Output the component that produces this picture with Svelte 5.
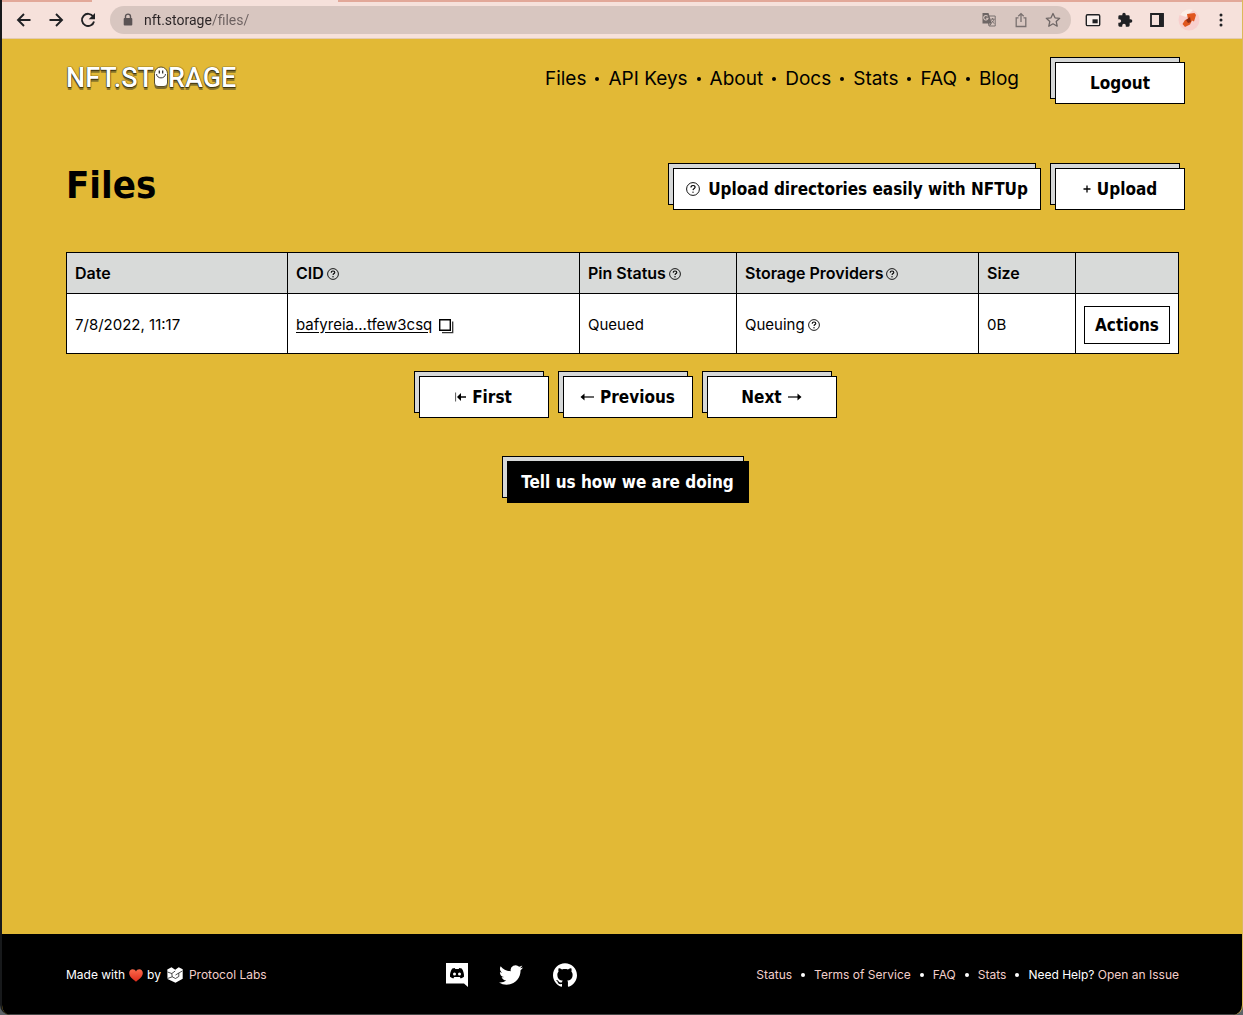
<script lang="ts">
  const navLinks = ['Files', 'API Keys', 'About', 'Docs', 'Stats', 'FAQ', 'Blog'];
  const footerLinks = ['Status', 'Terms of Service', 'FAQ', 'Stats'];
  const columns = [
    { label: 'Date', help: false },
    { label: 'CID', help: true },
    { label: 'Pin Status', help: true },
    { label: 'Storage Providers', help: true },
    { label: 'Size', help: false }
  ];
</script>

{#snippet help()}
  <svg class="help" viewBox="0 0 12 12" aria-hidden="true">
    <circle cx="6" cy="6" r="5.4" fill="none" stroke="currentColor" stroke-width="0.9" />
    <path d="M4.3 4.7C4.2 3.6 5 3 6 3s1.8.6 1.8 1.5C7.800 5.500 6.200 5.500 6 6.900" fill="none" stroke="currentColor" stroke-width="1.1" />
    <circle cx="6" cy="8.700" r="0.700" fill="currentColor" />
  </svg>
{/snippet}

<div class="window">
  <div class="tabs"><span class="tab"></span></div>
  <div class="toolbar">
    <button class="tool" aria-label="Back">
      <svg viewBox="0 0 16 16"><path d="M14.500 8H2.200M8 2 2 8l6 6" fill="none" stroke="#202124" stroke-width="1.900" /></svg>
    </button>
    <button class="tool" aria-label="Forward">
      <svg viewBox="0 0 16 16"><path d="M1.500 8h12.300M8 2l6 6-6 6" fill="none" stroke="#202124" stroke-width="1.900" /></svg>
    </button>
    <button class="tool" aria-label="Reload">
      <svg viewBox="0 0 16 16"><path d="M13.200 4.600A6.100 6.100 0 1 0 14 9.400" fill="none" stroke="#202124" stroke-width="1.900" /><path d="M15 1v6.300H8.700z" fill="#202124" /></svg>
    </button>
    <div class="address">
      <svg class="lock" viewBox="0 0 10 14"><path d="M2.500 6V3.600a2.500 2.500 0 0 1 5 0V6" fill="none" stroke="#5a5354" stroke-width="1.400" /><rect x="0.700" y="5" width="8.600" height="7.500" rx="1" fill="#5a5354" /></svg>
      <input aria-label="Address" value="nft.storage/files/" />
      <button class="tool" aria-label="Translate this page">
        <svg viewBox="0 0 16 16"><path d="M6 4h8.200v10H8z" fill="none" stroke="#79706f" /><path d="M1.500 1h6l3.300 10.500H1.500z" fill="#6e6665" /><path d="M6.600 4.400A2.200 2.200 0 1 0 7 6.300H4.900" fill="none" stroke="#d7c5bf" stroke-width="1.100" /><path d="M8.500 11.500h2.300L8.700 14z" fill="#6e6665" /><path d="M9.600 7.200h4M11.600 6v1.200M12.900 7.400c-.4 1.700-1.500 2.900-2.600 3.500M10.500 8.400l2.700 3.300" fill="none" stroke="#6e6665" stroke-width="0.900" /></svg>
      </button>
      <button class="tool" aria-label="Share">
        <svg viewBox="0 0 16 16"><path d="M5.500 5.800H3.200v8.700h9.600V5.800h-2.300M8 10V2M5.300 4.300 8 1.600l2.700 2.700" fill="none" stroke="#79706f" stroke-width="1.300" /></svg>
      </button>
      <button class="tool" aria-label="Bookmark this tab">
        <svg viewBox="0 0 16 16"><path d="m8 1.500 2 4.300 4.700.5-3.500 3.200 1 4.700L8 11.800l-4.200 2.400 1-4.700L1.300 6.300 6 5.800z" fill="none" stroke="#6e6665" stroke-width="1.300" stroke-linejoin="round" /></svg>
      </button>
    </div>
    <button class="tool" aria-label="Picture in picture">
      <svg viewBox="0 0 16 16"><rect x="1.300" y="2.800" width="13.400" height="10.800" rx="1.200" fill="#f9efec" stroke="#202124" stroke-width="1.400" /><path d="M7.500 7.300h5.200v4H7.500z" fill="#202124" /></svg>
    </button>
    <button class="tool" aria-label="Extensions">
      <svg viewBox="0 0 24 24"><path d="M20.500 11H19V7a2 2 0 0 0-2-2h-4V3.500a2.500 2.500 0 0 0-5 0V5H4a2 2 0 0 0-2 2v3.800h1.500a2.700 2.700 0 0 1 0 5.400H2V20a2 2 0 0 0 2 2h3.800v-1.500a2.700 2.700 0 0 1 5.400 0V22H17a2 2 0 0 0 2-2v-4h1.500a2.500 2.500 0 0 0 0-5z" fill="#202124" /></svg>
    </button>
    <button class="tool" aria-label="Side panel">
      <svg viewBox="0 0 16 16"><path d="M2 2h12v12H2z" fill="none" stroke="#202124" stroke-width="1.800" /><path d="M10 2h4.500v12H10z" fill="#202124" /></svg>
    </button>
    <button class="tool profile" aria-label="Profile">
      <svg viewBox="0 0 22 22"><circle cx="11" cy="11" r="10.500" fill="#f8cfcd" /><path d="M2 6a10.500 10.500 0 0 1 13-5L8 8z" fill="#fbeee8" /><path d="m9 5 7.500-1 1.500 2-2 6.500-2-1-2 4-5 2.500-2.500-3L7 11l3-1z" fill="#e0561f" /><path d="m8 11 4-3 1 5-3 1z" fill="#8d2d13" /></svg>
    </button>
    <button class="tool" aria-label="Menu">
      <svg viewBox="0 0 16 16" fill="#202124"><circle cx="8" cy="3" r="1.500" /><circle cx="8" cy="8" r="1.500" /><circle cx="8" cy="13" r="1.500" /></svg>
    </button>
  </div>

  <header>
    <a class="logo" href="#home" aria-label="NFT.Storage home">
      <span>NFT.ST</span>
      <svg viewBox="0 0 14 24" aria-hidden="true"><path d="M.5 10h13v9.500a3.500 3.500 0 0 1-3.500 3.500H4A3.500 3.500 0 0 1 .5 19.500z" fill="#7d6a2c" /><path d="M.5 7.500a6.500 6.500 0 0 1 13 0v9.500a3.500 3.500 0 0 1-3.500 3.500H4A3.500 3.500 0 0 1 .5 17z" fill="#fff" stroke="#4c411d" stroke-width="0.900" /><path d="M2.500 8c.5 5.200 8.500 5.200 9 0" fill="none" stroke="#222" stroke-width="0.900" /><path d="M5.300 4.500v3M8.700 4.500v3" stroke="#222" stroke-width="1.200" /></svg>
      <span>RAGE</span>
    </a>
    <nav aria-label="Main">
      {#each navLinks as link, i}
        {#if i}<span class="dot"></span>{/if}
        <a href="#{link}">{link}</a>
      {/each}
    </nav>
    <button class="btn">Logout</button>
  </header>

  <main>
    <div class="title">
      <h1>Files</h1>
      <button class="btn wide">
        <svg class="help big" viewBox="0 0 12 12" aria-hidden="true"><circle cx="6" cy="6" r="5.500" fill="none" stroke="currentColor" stroke-width="0.800" /><path d="M4.300 4.700C4.200 3.600 5 3 6 3s1.800.6 1.800 1.500C7.800 5.500 6.200 5.500 6 6.900" fill="none" stroke="currentColor" /><circle cx="6" cy="8.700" r="0.600" fill="currentColor" /></svg>
        Upload directories easily with NFTUp
      </button>
      <button class="btn">
        <svg class="plus" viewBox="0 0 8 8" aria-hidden="true"><path d="M4 0.500v7M.5 4h7" stroke="currentColor" stroke-width="1.300" /></svg>
        Upload
      </button>
    </div>

    <table>
      <thead>
        <tr>
          {#each columns as column}
            <th scope="col">{column.label}{#if column.help}{@render help()}{/if}</th>
          {/each}
          <th aria-label="Actions"></th>
        </tr>
      </thead>
      <tbody>
        <tr>
          <td>7/8/2022, 11:17</td>
          <td>
            <a href="#bafyreia">bafyreia...tfew3csq</a>
            <button class="copy" aria-label="Copy CID">
              <svg viewBox="0 0 16 16"><path d="M1.700 1.700h10.600v10.600H1.700z" fill="none" stroke="#000" stroke-width="1.400" /><path d="M14.700 3.500v11.200H4" fill="none" stroke="#333" stroke-width="1.300" /></svg>
            </button>
          </td>
          <td>Queued</td>
          <td>Queuing{@render help()}</td>
          <td>0B</td>
          <td><button class="actions">Actions</button></td>
        </tr>
      </tbody>
    </table>

    <div class="pager">
      <button class="btn">
        <svg class="first" viewBox="0 0 11 10" aria-hidden="true"><path d="M.6.500v9" stroke="#555" /><path d="M3 5h8" stroke="#000" stroke-width="1.500" /><path d="M2 5 6 1v8z" /></svg>
        First
      </button>
      <button class="btn">
        <svg class="arrow" viewBox="0 0 14 10" aria-hidden="true"><path d="M2 5h12" stroke="#000" stroke-width="1.200" /><path d="M.5 5 4.500 1.500v7z" /></svg>
        Previous
      </button>
      <button class="btn">
        Next
        <svg class="arrow" viewBox="0 0 14 10" aria-hidden="true"><path d="M0 5h12" stroke="#000" stroke-width="1.200" /><path d="M13.500 5l-4-3.500v7z" /></svg>
      </button>
    </div>
    <div class="feedback"><button class="btn dark">Tell us how we are doing</button></div>
  </main>

  <footer>
    <div class="credit">
      <span>Made with</span>
      <svg class="heart" viewBox="0 0 14 13" role="img" aria-label="love"><defs><linearGradient id="heart" x2="0" y2="1"><stop stop-color="#fb6a4b" /><stop offset="1" stop-color="#dd2a1b" /></linearGradient></defs><path d="M7 12.700C3 10 .2 7.400.2 4.100.2 1.900 1.800.3 3.700.3 5.200.3 6.400 1.100 7 2.500 7.600 1.100 8.800.3 10.300.3c1.900 0 3.500 1.600 3.500 3.800 0 3.300-2.800 5.900-6.800 8.600z" fill="url(#heart)" /></svg>
      <span>by</span>
      <svg class="labs" viewBox="0 0 16 16" aria-hidden="true"><path d="M.3 2.600 4.500.3l3.700 2.400L11.700.3l4 2v9.500L8.500 15.800.5 12z" fill="#fff" /><path d="m.5 5 4.300 1.500L8.200 4M4.800 6.500l.4 3.300 3.300 1.700 3.300-2V6L8.500 8M11.800 6l3.500-2M5.200 9.800.5 11.500" fill="none" stroke="#000" stroke-width="0.700" /></svg>
      <a href="#labs">Protocol Labs</a>
    </div>
    <div class="social">
      <a href="#discord" aria-label="Discord"><svg viewBox="0 0 24 24"><path d="M1 0h22v24l-4-3.500H1z" fill="#fff" /><path d="M7.300 5.600 9.700 5l.6 1.100h3.400l.6-1.100 2.400.6c1.700 2.300 2.500 5.300 2.300 8.200-1.100.9-2.100 1.400-3.300 1.600l-.9-1.400H9.200l-.9 1.400c-1.200-.2-2.200-.7-3.300-1.600-.2-2.900.6-5.900 2.300-8.200z" fill="#000" /><circle cx="9.500" cy="11" r="1.500" fill="#fff" /><circle cx="14.500" cy="11" r="1.500" fill="#fff" /></svg></a>
      <a href="#twitter" aria-label="Twitter"><svg viewBox="0 0 24 24"><path d="M23.953 4.570a10 10 0 01-2.825.775 4.958 4.958 0 002.163-2.723c-.951.555-2.005.959-3.127 1.184a4.920 4.920 0 00-8.384 4.482C7.690 8.095 4.067 6.130 1.640 3.162a4.822 4.822 0 00-.666 2.475c0 1.710.870 3.213 2.188 4.096a4.904 4.904 0 01-2.228-.616v.060a4.923 4.923 0 003.946 4.827 4.996 4.996 0 01-2.212.085 4.936 4.936 0 004.604 3.417 9.867 9.867 0 01-6.102 2.105c-.390 0-.779-.023-1.170-.067a13.995 13.995 0 007.557 2.209c9.053 0 13.998-7.496 13.998-13.985 0-.210 0-.420-.015-.630A9.935 9.935 0 0024 4.590z" fill="#fff" /></svg></a>
      <a href="#github" aria-label="GitHub"><svg viewBox="0 0 24 24"><path d="M12 .297c-6.630 0-12 5.373-12 12 0 5.303 3.438 9.800 8.205 11.385.600.113.820-.258.820-.577 0-.285-.010-1.040-.015-2.040-3.338.724-4.042-1.610-4.042-1.610C4.422 18.070 3.633 17.700 3.633 17.700c-1.087-.744.084-.729.084-.729 1.205.084 1.838 1.236 1.838 1.236 1.070 1.835 2.809 1.305 3.495.998.108-.776.417-1.305.760-1.605-2.665-.300-5.466-1.332-5.466-5.930 0-1.310.465-2.380 1.235-3.220-.135-.303-.540-1.523.105-3.176 0 0 1.005-.322 3.300 1.230.960-.267 1.980-.399 3-.405 1.020.006 2.040.138 3 .405 2.280-1.552 3.285-1.230 3.285-1.230.645 1.653.240 2.873.120 3.176.765.840 1.230 1.910 1.230 3.220 0 4.610-2.805 5.625-5.475 5.920.420.360.810 1.096.810 2.220 0 1.606-.015 2.896-.015 3.286 0 .315.210.690.825.570C20.565 22.092 24 17.592 24 12.297c0-6.627-5.373-12-12-12" fill="#fff" /></svg></a>
    </div>
    <div class="links">
      {#each footerLinks as link}
        <a href="#{link}">{link}</a><span class="dot"></span>
      {/each}
      <span>Need Help? <a href="#issue">Open an Issue</a></span>
    </div>
  </footer>
</div>

<style>
  :global(body) {
    margin: 0;
    background: #5d6468;
  }

  .window {
    box-sizing: border-box;
    min-height: 100vh;
    display: flex;
    flex-direction: column;
    overflow: hidden;
    border-left: 2px solid #17191b;
    border-right: 1px solid #dcb95a;
    border-radius: 0 0 10px 10px;
    background: #e2b936;
    color: #000;
    font-family: Inter, 'Liberation Sans', sans-serif;
    font-size: 16px;
    line-height: 24px;
  }

  svg {
    display: block;
    flex: none;
  }

  button {
    font: inherit;
    color: inherit;
    cursor: pointer;
  }

  a {
    color: inherit;
    text-decoration: none;
  }

  .tabs {
    height: 2px;
    background: #e2a899;
  }

  .tab {
    display: block;
    width: 246px;
    height: 2px;
    margin-left: 90px;
    background: #f6e1db;
  }

  .toolbar {
    display: flex;
    align-items: center;
    gap: 16px;
    height: 36px;
    padding: 0 13px 0 14px;
    background: #f6e1db;
    border-bottom: 1px solid #e3cbb0;
  }

  .tool {
    width: 16px;
    height: 16px;
    padding: 0;
    border: 0;
    background: none;
  }

  .tool svg {
    width: 16px;
    height: 16px;
  }

  .profile,
  .profile svg {
    width: 22px;
    height: 22px;
  }

  .profile {
    margin: 0 -3px;
  }

  .address {
    flex: 1;
    display: flex;
    align-items: center;
    gap: 16px;
    height: 28px;
    box-sizing: border-box;
    padding: 0 10px 0 13px;
    margin: 0 -2px;
    border-radius: 14px;
    background: #d8c6c0;
  }

  .address .lock {
    width: 10px;
    height: 14px;
  }

  .address input {
    flex: 1;
    min-width: 0;
    padding: 0;
    margin-left: -5px;
    border: 0;
    outline: 0;
    font: 14px/20px Roboto, sans-serif;
    color: transparent;
    background: linear-gradient(90deg, #2a2425 68px, #6b605f 68px);
    background-clip: text;
  }

  header {
    display: flex;
    align-items: center;
    padding: 23px 57px 0 64px;
  }

  .logo {
    display: flex;
    align-items: center;
    margin-right: auto;
    padding-bottom: 10px;
    color: #fff;
    font: 500 27px/32px Roboto, sans-serif;
    text-shadow: 0 0 1px #3a310f, 0 0 1px #3a310f, 0 1px 1px #3a310f, 0 3px 0 #8d772c;
  }

  .logo svg {
    width: 14px;
    height: 24px;
  }

  nav {
    display: flex;
    align-items: center;
    gap: 9px;
    margin-right: 36px;
    padding-bottom: 8px;
    font-size: 19px;
  }

  .dot {
    width: 4px;
    height: 4px;
    border-radius: 50%;
    background: currentColor;
  }

  .btn {
    display: flex;
    align-items: center;
    justify-content: center;
    gap: 6px;
    box-sizing: border-box;
    min-width: 130px;
    height: 42px;
    padding: 0 12px;
    border: 1px solid #000;
    border-radius: 0;
    background: #fff;
    box-shadow: -5px -5px 0 -1px #d6d8d8, -5px -5px 0 0 #000;
    font: bold 17px/24px 'DejaVu Sans Condensed', 'DejaVu Sans', sans-serif;
    white-space: nowrap;
  }

  .wide {
    gap: 8px;
  }

  .dark {
    min-width: 242px;
    background: #000;
    color: #fff;
  }

  main {
    flex: 1;
    padding: 0 63px 0 64px;
  }

  .title {
    display: flex;
    align-items: center;
    gap: 14px;
    margin: 64px -6px 42px 0;
  }

  h1 {
    margin: 0 auto 0 0;
    padding-bottom: 8px;
    font: bold 38px/34px 'DejaVu Sans Condensed', 'DejaVu Sans', sans-serif;
  }

  .help {
    display: inline-block;
    width: 12px;
    height: 12px;
    margin-left: 3px;
    vertical-align: -1px;
  }

  .big {
    width: 14px;
    height: 14px;
    margin-left: 0;
  }

  .plus {
    width: 8px;
    height: 8px;
  }

  .first {
    width: 11px;
    height: 10px;
  }

  .arrow {
    width: 14px;
    height: 10px;
  }

  table {
    width: 100%;
    table-layout: fixed;
    border-collapse: collapse;
    background: #fff;
  }

  th,
  td {
    box-sizing: border-box;
    padding: 8px;
    border: 1px solid #000;
    text-align: left;
    white-space: nowrap;
  }

  th {
    background: #d8dad9;
    font-weight: 600;
  }

  th:nth-child(1) { width: 221px; }
  th:nth-child(2) { width: 292px; }
  th:nth-child(3) { width: 157px; }
  th:nth-child(4) { width: 242px; }
  th:nth-child(5) { width: 97px; }
  th:nth-child(6) { width: 103px; }

  td {
    height: 60px;
    padding-top: 10px;
    font-size: 15px;
  }

  td a {
    text-decoration: underline;
    text-underline-offset: 2px;
  }

  .copy {
    padding: 0;
    border: 0;
    margin-left: 2px;
    background: none;
    vertical-align: -4px;
  }

  .copy svg {
    width: 16px;
    height: 16px;
  }

  .actions {
    display: block;
    width: 100%;
    height: 38px;
    padding: 0;
    border: 1px solid #000;
    background: #fff;
    font: bold 17px/24px 'DejaVu Sans Condensed', 'DejaVu Sans', sans-serif;
  }

  .pager,
  .feedback {
    display: flex;
    justify-content: center;
    gap: 14px;
    padding-left: 10px;
    margin-top: 22px;
  }

  .feedback {
    margin-top: 43px;
    margin-bottom: 40px;
  }

  footer {
    display: flex;
    align-items: center;
    justify-content: space-between;
    box-sizing: border-box;
    height: 81px;
    padding: 2px 63px 0 64px;
    border-bottom: 1px solid #454545;
    background: #000;
    color: #fff;
    font-size: 12px;
    line-height: 16px;
  }

  footer a {
    color: #f3cfcb;
  }

  .credit {
    display: flex;
    align-items: center;
    gap: 4px;
  }

  .heart {
    width: 14px;
    height: 13px;
  }

  .labs {
    width: 16px;
    height: 16px;
    margin: 0 2px;
  }

  .social {
    display: flex;
    gap: 30px;
  }

  .social svg {
    width: 24px;
    height: 24px;
  }

  .links {
    display: flex;
    align-items: center;
    gap: 9px;
  }
</style>
